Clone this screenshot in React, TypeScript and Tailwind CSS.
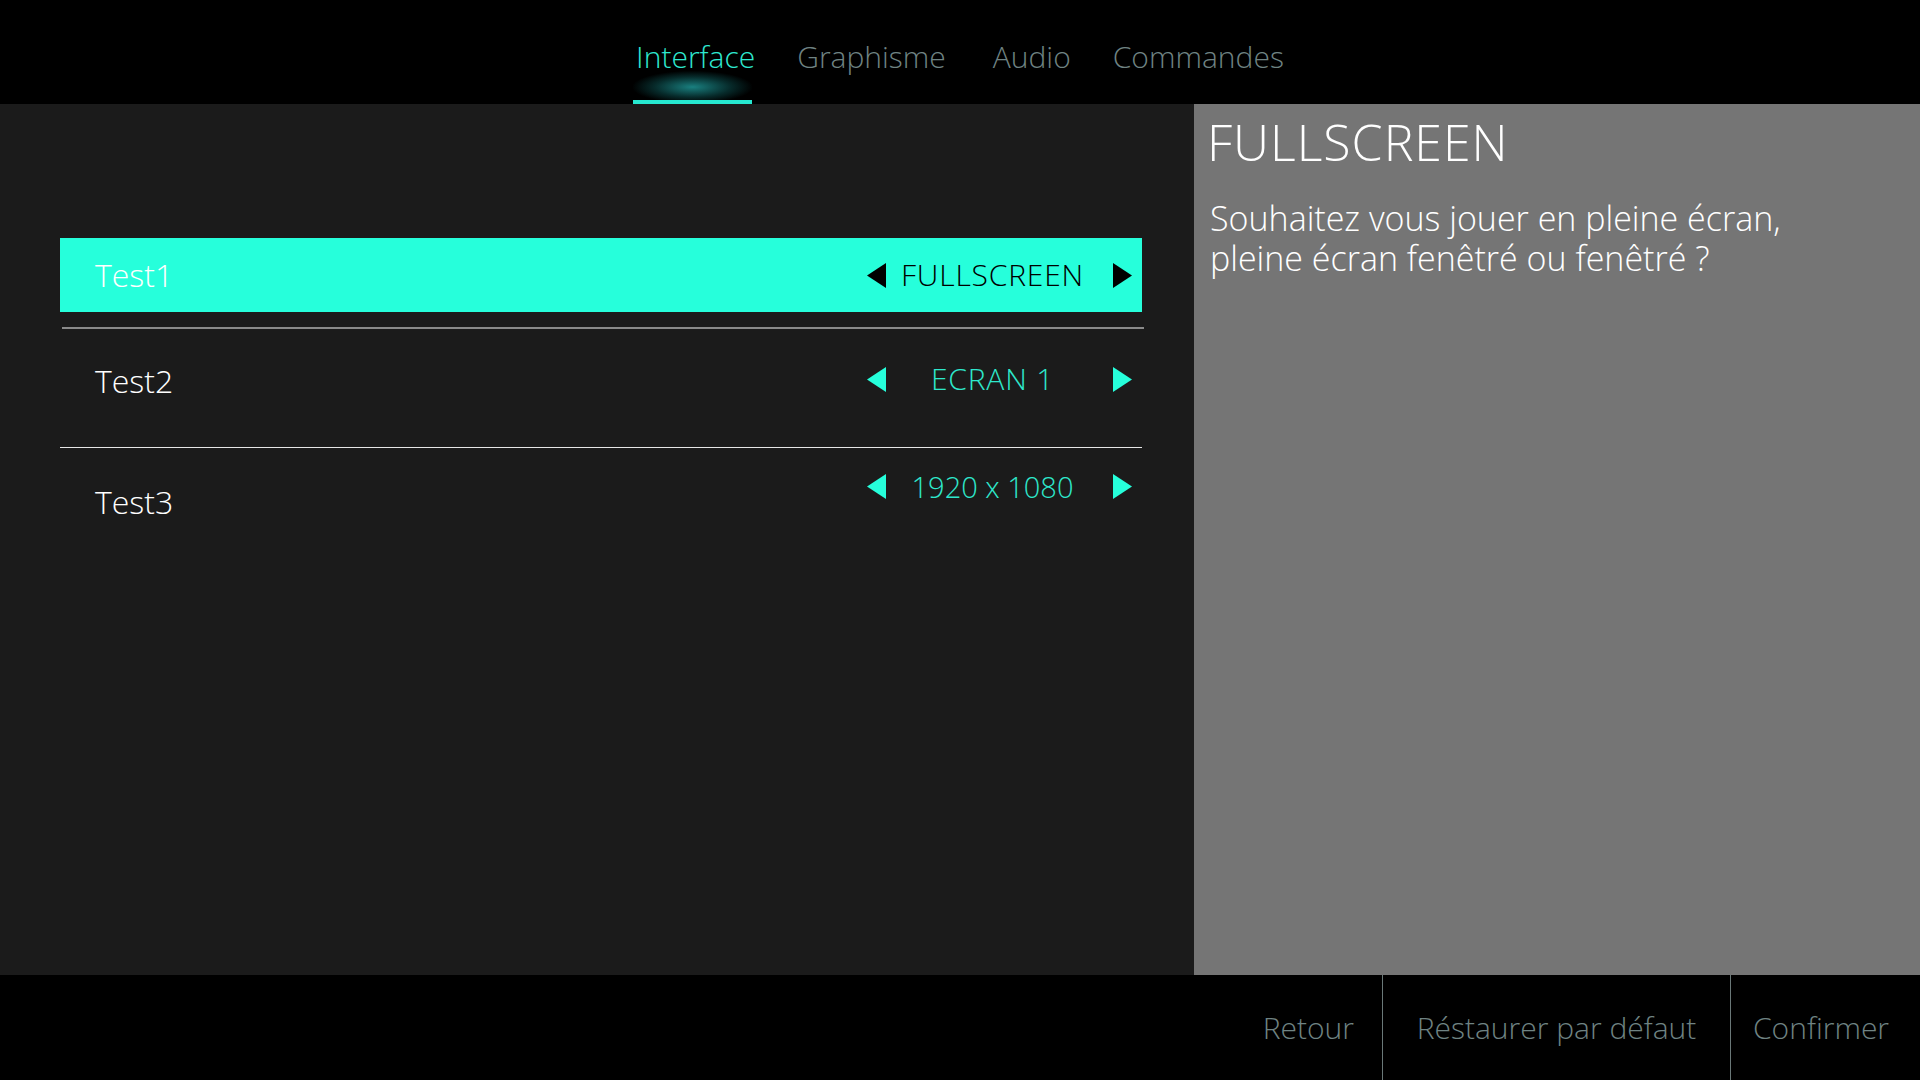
import React from "react";

const CYAN = "#26ffdb";

function Arrow({ dir, color }: { dir: "left" | "right"; color: string }) {
  return (
    <svg width="19" height="25" viewBox="0 0 19 25" className="shrink-0">
      {dir === "left" ? (
        <polygon points="19,0 0,12.5 19,25" fill={color} />
      ) : (
        <polygon points="0,0 19,12.5 0,25" fill={color} />
      )}
    </svg>
  );
}

function Selector({
  value,
  active,
  size,
}: {
  value: string;
  active?: boolean;
  size: "caps" | "num";
}) {
  return (
    <div className="flex items-center">
      <Arrow dir="left" color={active ? "#000" : CYAN} />
      <div
        className={`w-[227px] pr-[14px] text-center leading-none ${
          size === "caps" ? "text-[30px] tracking-[0.8px]" : "text-[29px]"
        } ${active ? "text-black" : "text-[#2ee8cc]"}`}
      >
        {value}
      </div>
      <Arrow dir="right" color={active ? "#000" : CYAN} />
    </div>
  );
}

export default function App() {
  return (
    <div
      className="flex h-[1080px] w-[1920px] flex-col overflow-hidden bg-black font-light"
      style={{ fontFamily: "'Open Sans', 'Noto Sans', sans-serif" }}
    >
      {/* Top navigation */}
      <div className="relative flex h-[104px] shrink-0 items-start justify-center bg-black pt-[42px]">
        <div className="flex items-start gap-[42px] text-[30px] leading-none text-[#6f8383]">
          <div className="relative flex flex-col items-center">
            <span className="text-[#2ee8d0]">Interface</span>
            <div className="absolute left-[-3px] top-[29px] h-[32px] w-[119px] bg-[radial-gradient(ellipse_at_center,rgba(30,150,150,0.85)_0%,rgba(15,95,95,0.45)_45%,transparent_72%)]" />
            <div className="absolute left-[-3px] top-[58px] h-[4px] w-[119px] bg-[#26e8d0]" />
          </div>
          <span>Graphisme</span>
          <span className="ml-[5px]">Audio</span>
          <span>Commandes</span>
        </div>
      </div>

      {/* Main */}
      <div className="flex flex-1">
        <div className="w-[1194px] shrink-0 bg-[#1b1b1b] pt-[134px]">
          <div className="ml-[60px] flex h-[74px] w-[1082px] items-center justify-between bg-[#26ffdb] pl-[35px] pr-[10px]">
            <span className="text-[32px] leading-none text-white">Test1</span>
            <Selector value="FULLSCREEN" size="caps" active />
          </div>
          <div className="ml-[62px] mt-[15px] h-[2px] w-[1082px] bg-[#8a8a8a]" />
          <div className="ml-[60px] flex h-[104px] w-[1082px] items-center justify-between pl-[35px] pr-[10px]">
            <span className="text-[32px] leading-none text-white">Test2</span>
            <div className="-mt-[4px]">
              <Selector value="ECRAN 1" size="caps" />
            </div>
          </div>
          <div className="ml-[60px] mt-[14px] h-[1px] w-[1082px] bg-[#e6e6e6]" />
          <div className="ml-[60px] flex h-[108px] w-[1082px] items-center justify-between pl-[35px] pr-[10px]">
            <span className="text-[32px] leading-none text-white">Test3</span>
            <div className="-mt-[32px]">
              <Selector value="1920 x 1080" size="num" />
            </div>
          </div>
        </div>

        <div className="flex-1 bg-[#757575] pl-[13px] pt-[8px] text-white">
          <div className="text-[50px] leading-[1.2] tracking-[1px]">FULLSCREEN</div>
          <div className="mt-[26px] pl-[3px] text-[34px] leading-[40px]">
            <div>Souhaitez vous jouer en pleine écran,</div>
            <div>pleine écran fenêtré ou fenêtré ?</div>
          </div>
        </div>
      </div>

      {/* Bottom bar */}
      <div className="flex h-[105px] shrink-0 justify-end bg-black text-[30px] leading-none text-[#6f8383]">
        <div className="flex items-center pr-[28px]">Retour</div>
        <div className="w-px bg-[#6a7878]" />
        <div className="flex w-[347px] items-center justify-center">Réstaurer par défaut</div>
        <div className="w-px bg-[#6a7878]" />
        <div className="flex w-[189px] items-center pl-[22px]">Confirmer</div>
      </div>
    </div>
  );
}
